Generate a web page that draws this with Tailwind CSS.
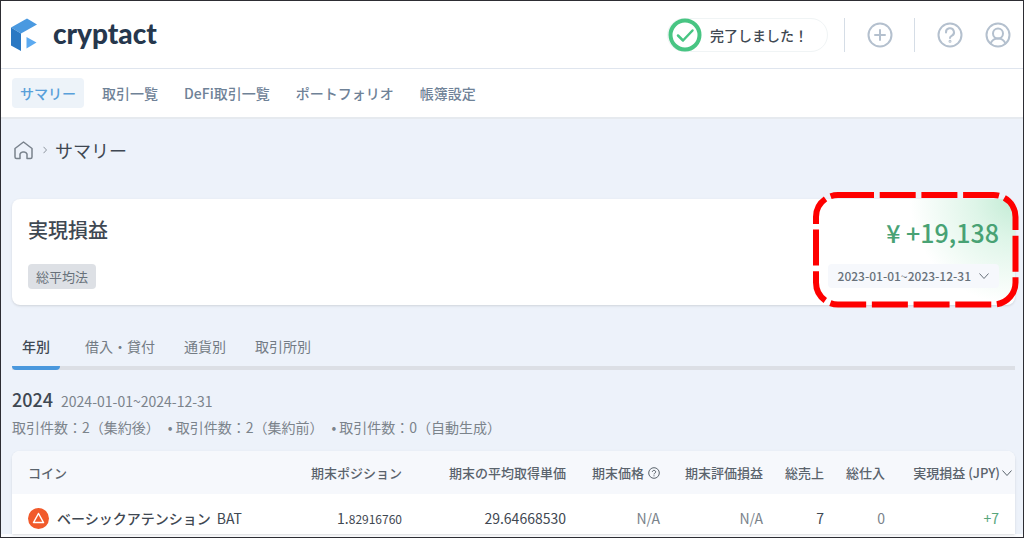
<!DOCTYPE html>
<html lang="ja">
<head>
<meta charset="utf-8">
<meta name="viewport" content="width=device-width, initial-scale=1">
<title>cryptact - サマリー</title>
<script src="https://cdn.jsdelivr.net/npm/@tailwindcss/browser@4"></script>
</head>
<body class="min-h-screen border border-[#2d2d33] bg-[#edf2fa] font-['Noto_Sans_CJK_JP',sans-serif] text-[#3f4852]">

<header class="flex h-[68px] items-center justify-between border-b border-[#dfe5ee] bg-white pl-2.5 pr-3">
  <a href="#" class="flex items-center gap-3.5" aria-label="cryptact">
    <svg class="h-[34px] w-7" viewBox="0 0 28 34">
      <path d="M0 9.500 16 0.500 26 6.500 10 15.500Z" fill="#4a99e0"/>
      <path d="M0 9.500 10 15.500V33L0 27.500Z" fill="#2a78c3"/>
      <path d="M15.500 19 25.500 24.500 15.500 30.500Z" fill="#5caaf0"/>
    </svg>
    <span class="pb-1 font-[Lato] text-[28px] leading-8 font-black text-[#26374d]">cryptact</span>
  </a>
  <div class="flex items-center">
    <div class="flex h-[34px] items-center gap-2 rounded-full border border-[#f0f4f5] pr-[19px]">
      <svg class="h-[34px] w-[34px]" viewBox="0 0 34 34" fill="none" stroke="#48c583">
        <circle cx="17" cy="17" r="14.500" stroke-width="4"/>
        <path d="m10 17.500 5 5 9.500-10" stroke-width="2.500" stroke-linecap="round" stroke-linejoin="round"/>
      </svg>
      <span class="text-sm font-medium">完了しました！</span>
    </div>
    <div class="ml-4 h-[34px] w-px bg-[#d5dde6]"></div>
    <button type="button" class="ml-[22px]" aria-label="追加">
      <svg class="h-[26px] w-[26px]" viewBox="0 0 26 26" fill="none" stroke="#b4c0ce" stroke-width="2" stroke-linecap="round"><circle cx="13" cy="13" r="11.500"/><path d="M13 8v10M8 13h10"/></svg>
    </button>
    <div class="ml-[21px] h-[34px] w-px bg-[#d5dde6]"></div>
    <button type="button" class="ml-[22px]" aria-label="ヘルプ">
      <svg class="h-[26px] w-[26px]" viewBox="0 0 26 26" fill="none" stroke="#b4c0ce" stroke-width="2" stroke-linecap="round"><circle cx="13" cy="13" r="11.500"/><path d="M9 10.500a4 4 0 1 1 6 3.200c-1.400.800-2 1.300-2 2.300"/><circle cx="13" cy="19.300" r=".5"/></svg>
    </button>
    <button type="button" class="ml-[22px]" aria-label="アカウント">
      <svg class="h-[26px] w-[26px]" viewBox="0 0 26 26" fill="none" stroke="#b4c0ce" stroke-width="2" stroke-linecap="round"><circle cx="13" cy="13" r="11.500"/><circle cx="13" cy="11.500" r="5"/><path d="M5.500 21.500c1.300-3 4-5 7.500-5s6.200 2 7.500 5"/></svg>
    </button>
  </div>
</header>

<nav class="flex h-[50px] items-center gap-2.5 border-b-2 border-[#e6eaef] bg-white pl-[11px] text-sm font-medium text-[#6f8297]">
  <a href="#" aria-current="page" class="flex h-[30px] items-center rounded-sm bg-[#edf3f9] px-2 text-[#58a0da]">サマリー</a>
  <a href="#" class="px-2">取引一覧</a>
  <a href="#" class="px-2">DeFi取引一覧</a>
  <a href="#" class="px-2">ポートフォリオ</a>
  <a href="#" class="px-2">帳簿設定</a>
</nav>

<main class="border-b-[3px] border-[#fbfcfe] pl-[11px] pr-2">
  <div class="flex h-20 items-start pt-[19px]">
    <div class="flex h-6 items-center">
      <a href="#" class="ml-0.5" aria-label="ホーム">
        <svg class="h-[19px] w-[19px]" viewBox="0 0 19 19" fill="none" stroke="#79828c" stroke-width="1.500" stroke-linejoin="round"><path d="M1 7.500 9.500 1 18 7.500V16a1.500 1.500 0 0 1-1.500 1.500H13V13a3 3 0 0 0-3-2H9a3 3 0 0 0-3 2v4.500H2.500A1.500 1.500 0 0 1 1 16Z"/></svg>
      </a>
      <svg class="ml-2.5 h-2 w-1" viewBox="0 0 4 8" fill="none" stroke="#8d959e"><path d="m.5.800 3 3.200-3 3.200"/></svg>
      <h1 class="ml-2 text-lg leading-6">サマリー</h1>
    </div>
  </div>

  <section class="relative flex h-[106px] justify-between rounded-lg bg-white bg-[radial-gradient(circle_at_100%_0,#c3ecd5_0,#def5e8_40px,#ffffff_105px)] px-4 shadow">
    <div class="pt-[15px]">
      <h2 class="text-xl leading-8 font-medium">実現損益</h2>
      <span class="mt-[18px] inline-flex h-[25px] items-center rounded bg-[#dde0e5] px-2 text-[13px] text-[#68717a]">総平均法</span>
    </div>
    <div class="flex flex-col items-end pt-[17px]">
      <p class="text-[25px] leading-8 font-medium text-[#48a274]">¥ +19,138</p>
      <button type="button" class="mt-4 flex h-6 items-center gap-2 rounded bg-[#f6f8fc] px-2.5 text-xs font-medium text-[#68717a]">2023-01-01~2023-12-31
        <svg class="h-1.5 w-2.5" viewBox="0 0 10 6" fill="none" stroke="currentColor"><path d="m.5.500 4.500 5 4.500-5"/></svg>
      </button>
    </div>
    <svg class="pointer-events-none absolute -top-2 -right-1 h-[118px] w-[207px]" viewBox="0 0 207 118" fill="none" stroke="#fe0000" stroke-width="6" aria-hidden="true">
      <rect x="4" y="4" width="199.500" height="109.500" rx="22" stroke-dasharray="36 5.700 36 5.700 36 5.700 36 5.700 36 5.700 36 5.700 36 5.700 36 5.700 36 5.700 36 5.700 36 5.700 32 5.700 36 5.700 28 5.700"/>
    </svg>
  </section>

  <div role="tablist" class="mt-[25px] flex border-b-4 border-[#dcdfe5] text-sm text-[#737b84]">
    <button type="button" role="tab" aria-selected="true" class="-mb-1 h-10 rounded-b-sm border-b-4 border-[#4a98dd] px-2.5 pb-1 font-medium text-[#3f4852]">年別</button>
    <button type="button" role="tab" class="ml-[25px] h-9 pb-1">借入・貸付</button>
    <button type="button" role="tab" class="ml-[29px] h-9 pb-1">通貨別</button>
    <button type="button" role="tab" class="ml-[29px] h-9 pb-1">取引所別</button>
  </div>

  <div class="mt-[15px] flex h-7 items-baseline gap-2">
    <h3 class="text-lg leading-7 font-medium">2024</h3>
    <span class="text-sm leading-7 text-[#7b838b]">2024-01-01~2024-12-31</span>
  </div>
  <p class="flex gap-2 text-sm leading-7 text-[#7b838b]"><span>取引件数：2（集約後）</span><span>• 取引件数：2（集約前）</span><span>• 取引件数：0（自動生成）</span></p>

  <table class="mt-2.5 w-full table-fixed overflow-hidden rounded-t-lg bg-white text-right shadow-sm">
    <colgroup><col><col class="w-[152px]"><col class="w-[164px]"><col class="w-[94px]"><col class="w-[103px]"><col class="w-[61px]"><col class="w-[61px]"><col class="w-[118px]"></colgroup>
    <thead class="bg-[#f6f8fc] text-[13px] whitespace-nowrap text-[#5a636c]">
      <tr class="h-[43px] *:pr-3 *:font-medium">
        <th class="pl-4 text-left">コイン</th><th>期末ポジション</th><th>期末の平均取得単価</th>
        <th><span class="flex items-center justify-end gap-1">期末価格<svg class="h-3 w-3" viewBox="0 0 12 12" fill="none" stroke="currentColor"><circle cx="6" cy="6" r="5.300"/><path d="M4.300 4.800a1.700 1.500 0 1 1 2.500 1.400C6.200 6.500 6 6.700 6 7.400M6 8.300v1"/></svg></span></th>
        <th>期末評価損益</th><th>総売上</th><th>総仕入</th>
        <th class="pr-[3px]!"><span class="flex items-center justify-end gap-0.5">実現損益 (JPY)<svg class="h-1.5 w-2.5" viewBox="0 0 10 6" fill="none" stroke="currentColor"><path d="m.5.500 4.500 5 4.500-5"/></svg></span></th>
      </tr>
    </thead>
    <tbody class="text-sm whitespace-nowrap">
      <tr class="h-10 *:pt-2 *:pr-3">
        <td class="pl-4"><span class="flex items-center"><svg class="mr-2 h-[21px] w-[21px]" viewBox="0 0 21 21"><circle cx="10.500" cy="10.500" r="10.500" fill="#f15a2b"/><path d="M10.500 5.500 15.500 14.500H5.500Z" fill="#f15a2b" stroke="#fff" stroke-width="1.500" stroke-linejoin="round"/></svg><span class="font-medium">ベーシックアテンション</span><span class="ml-1.5">BAT</span></span></td>
        <td>1.<span class="text-xs">82916760</span></td><td>29.64668530</td><td class="text-[#7b838b]">N/A</td><td class="text-[#7b838b]">N/A</td><td>7</td><td class="text-[#7b838b]">0</td><td class="pr-4! text-[#58a67c]">+7</td>
      </tr>
    </tbody>
  </table>
</main>
</body>
</html>
